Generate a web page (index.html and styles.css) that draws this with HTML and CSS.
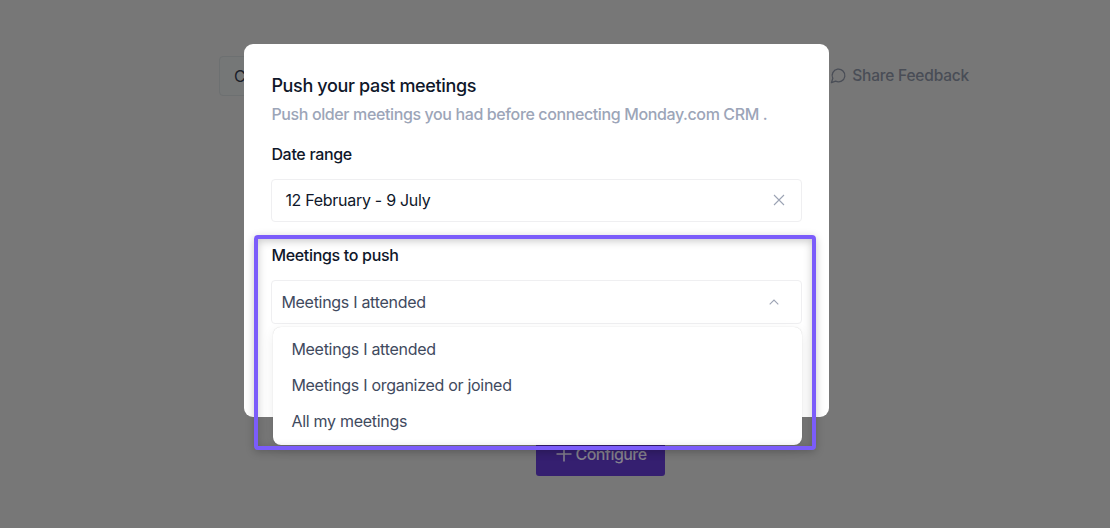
FILE: index.html
```html
<!DOCTYPE html>
<html lang="en">
<head>
<meta charset="utf-8">
<meta name="viewport" content="width=device-width,initial-scale=1">
<title>Push your past meetings</title>
<link rel="stylesheet" href="styles.css">
</head>
<body>
<div class="page">
    <div class="toolbar">
        <button type="button" class="back">C</button>
        <a class="feedback">
            <svg width="17" height="17" viewBox="0 0 24 24" fill="none" stroke="currentColor" stroke-width="1.8" stroke-linecap="round" stroke-linejoin="round"><path d="M7.9 20A9 9 0 1 0 4 16.1L2 22Z"/></svg>
            <span class="feedback-text">Share Feedback</span>
        </a>
    </div>
    <button type="button" class="configure">
        <svg width="16" height="16" viewBox="0 0 16 16" fill="none" stroke="currentColor" stroke-width="1.6"><path d="M8 0.5v15M0.5 8h15"/></svg>
        <span class="configure-text">Configure</span>
    </button>
</div>

<div class="modal">
    <h1 class="title">Push your past meetings</h1>
    <p class="subtitle">Push older meetings you had before connecting Monday.com CRM .</p>

    <div class="label">Date range</div>
    <div class="field date">
        <span>12 February - 9 July</span>
        <svg width="12" height="12" viewBox="0 0 12 12" fill="none" stroke="currentColor" stroke-width="1.1"><path d="M1 1l10 10M11 1L1 11"/></svg>
    </div>

    <div class="label">Meetings to push</div>
    <div class="field select">
        <span>Meetings I attended</span>
        <svg width="10" height="6" viewBox="0 0 10 6" fill="none" stroke="currentColor" stroke-width="1.1"><path d="M0.7 5.3L5 1l4.3 4.3"/></svg>
        <div class="menu">
            <div class="option">Meetings I attended</div>
            <div class="option">Meetings I organized or joined</div>
            <div class="option">All my meetings</div>
        </div>
    </div>
</div>

<div class="highlight"></div>
</body>
</html>
```
FILE: styles.css
```css
* {
    box-sizing: border-box;
}

body {
    margin: 0;
    height: 528px;
    overflow: hidden;
    position: relative;
    background: #777777;
    font-family: Inter, "Liberation Sans", sans-serif;
    font-size: 16px;
    letter-spacing: -0.29px;
    color: #0f172a;
}

button {
    font: inherit;
    letter-spacing: inherit;
}

.page {
    display: flex;
    flex-direction: column;
    height: 476px;
    justify-content: space-between;
    align-items: center;
    padding-top: 56px;
}

.toolbar {
    display: flex;
    justify-content: space-between;
    align-self: flex-start;
    width: 750px;
    margin-left: 219px;
}

.back {
    width: 100px;
    height: 40px;
    padding: 0 14px;
    text-align: left;
    color: #1c2029;
    background: #757777;
    border: 1px solid #6d7071;
    border-radius: 4px;
}

.feedback {
    display: flex;
    align-items: center;
    gap: 5px;
    height: 38px;
    color: #494d56;
    font-weight: 500;
}

.feedback-text {
    font-size: 15.5px;
    letter-spacing: -0.2px;
}

.configure {
    display: flex;
    align-items: center;
    justify-content: center;
    gap: 3px;
    width: 129px;
    height: 44px;
    margin-left: 91px;
    padding: 0 0 0 2px;
    color: #85828e;
    background: #351f70;
    border: 0;
    border-radius: 3px;
    font-weight: 500;
    letter-spacing: -0.55px;
}

.modal {
    position: absolute;
    left: 244.4px;
    top: 44.4px;
    width: 585px;
    height: 373px;
    padding: 30px 27px;
    background: #ffffff;
    border-radius: 9px;
}

.title {
    margin: 0;
    font-size: 18px;
    font-weight: 500;
    line-height: 24px;
    letter-spacing: -0.35px;
}

.subtitle {
    margin: 4px 0 16px;
    font-weight: 500;
    line-height: 24px;
    letter-spacing: -0.38px;
    color: #9ca5b8;
    white-space: nowrap;
}

.label {
    margin-bottom: 13px;
    font-weight: 500;
    line-height: 24px;
    letter-spacing: -0.32px;
}

.field {
    position: relative;
    display: flex;
    align-items: center;
    justify-content: space-between;
    height: 43px;
    margin-bottom: 21px;
    border: 1px solid #efeff1;
    border-radius: 4px;
}

.field svg {
    color: #9ca3b4;
}

.date {
    padding: 0 16px 1px 13px;
}

.select {
    height: 44px;
    padding: 0 22px 1px 9px;
    color: #3f4a5e;
}

.menu {
    position: absolute;
    left: 1px;
    top: 46px;
    width: 529px;
    height: 118px;
    padding: 4px 18px;
    background: #ffffff;
    border-radius: 8px;
    box-shadow: 0 0 1px rgba(0, 0, 0, 0.2), 0 4px 14px rgba(0, 0, 0, 0.07);
}

.option {
    height: 36px;
    line-height: 36px;
}

/* frame around the open select */
.highlight {
    position: absolute;
    left: 254px;
    top: 235px;
    width: 562px;
    height: 215px;
    border: 4px solid #7b5cfa;
    border-radius: 4px;
    box-shadow: 0 2px 8px rgba(0, 0, 0, 0.22), inset 0 2px 8px rgba(0, 0, 0, 0.22);
}
```
